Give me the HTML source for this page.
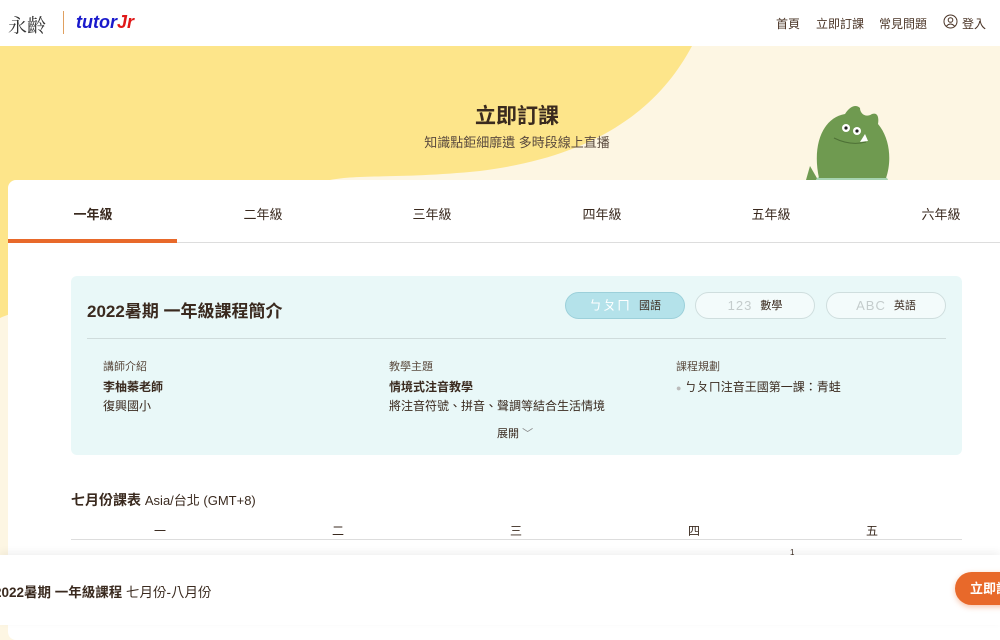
<!DOCTYPE html>
<html><head><meta charset="utf-8"><style>
*{margin:0;padding:0;box-sizing:border-box}
body{width:1000px;height:625px;overflow:hidden;position:relative;background:#fdf6e3;font-family:"Liberation Sans","Noto Sans CJK TC",sans-serif;color:#3a2a1f}
.abs{position:absolute}
header{position:absolute;left:0;top:0;width:1000px;height:46px;background:#fff;z-index:5}
.nav{position:absolute;top:15px;font-size:12px;color:#4a3426}
.card{position:absolute;left:8px;top:180px;width:1000px;height:460px;background:#fff;border-radius:8px}
.tab{position:absolute;top:24px;width:170px;text-align:center;font-size:13px;color:#3a2a1f}
.box{position:absolute;left:63px;top:96px;width:891px;height:179px;background:#e9f8f8;border-radius:6px}
.pill{position:absolute;top:16px;width:120px;height:27px;border:1px solid #cfdede;border-radius:14px;background:#f3fbfb;font-size:11px;line-height:25px;text-align:center}
.pill .g{color:#c4cccc;font-size:13px;letter-spacing:1px;margin-right:8px;vertical-align:-1px}
.lbl{font-size:11px;color:#5a4a3e}
.b{font-size:12px;font-weight:bold}
.t{font-size:12px}
.day{position:absolute;top:342px;font-size:12px;width:40px;text-align:center;margin-left:-20px}
</style></head><body>
<svg class="abs" style="left:0;top:46px" width="1000" height="300">
<path d="M0 0 H692 C660 60 600 110 480 125 C400 133 360 128 330 134 L0 134 Z" fill="#fde58a"/>
<path d="M0 120 H20 V265 C10 268 4 270 0 272 Z" fill="#fde58a"/>
<g>
<path d="M806 134 L810 120 L818 134 Z" fill="#6f9a50"/>
<ellipse cx="852" cy="134" rx="36" ry="8" fill="#a6d4b0"/>
<path d="M819 132 C812 100 822 72 845 68 C850 60 856 58 860 62 C860 68 866 72 872 68 C878 66 879 72 878 78 C890 92 892 115 886 132 Z" fill="#6f9a50"/>
<circle cx="846" cy="82" r="4" fill="#fff"/><circle cx="857" cy="85" r="4" fill="#fff"/>
<circle cx="846" cy="82" r="1.6" fill="#222"/><circle cx="857" cy="85" r="1.6" fill="#222"/>
<path d="M834 92 Q850 100 866 96" stroke="#4d7035" fill="none"/>
<path d="M860 96 L868 95 L865 88 Z" fill="#fff"/>
</g>
</svg>
<header>
<div class="abs" style="left:8px;top:11px;font-size:19px;font-family:'Noto Serif CJK SC',serif;color:#333">永齡</div>
<div class="abs" style="left:63px;top:11px;width:1px;height:23px;background:#e0a060"></div>
<div class="abs" style="left:76px;top:12px;font-size:18px;font-weight:bold;font-style:italic;color:#1a1acc">tutor<span style="color:#e01818">Jr</span></div>
<div class="nav" style="left:776px">首頁</div>
<div class="nav" style="left:816px">立即訂課</div>
<div class="nav" style="left:879px">常見問題</div>
<svg class="abs" style="left:943px;top:14px" width="15" height="15" viewBox="0 0 15 15"><circle cx="7.5" cy="7.5" r="6.5" fill="none" stroke="#4a3426"/><circle cx="7.5" cy="6" r="2.3" fill="none" stroke="#4a3426"/><path d="M3.5 12 Q7.5 8 11.5 12" fill="none" stroke="#4a3426"/></svg>
<div class="nav" style="left:962px">登入</div>
</header>
<div class="abs" style="left:0;width:1000px;text-align:center;top:100px;font-size:21px;font-weight:bold;color:#3a2a1f;padding-left:34px">立即訂課</div>
<div class="abs" style="left:0;width:1000px;text-align:center;top:132px;font-size:13px;color:#5a4a3e;padding-left:34px">知識點鉅細靡遺 多時段線上直播</div>
<div class="card">
<div class="tab" style="left:0;font-weight:bold">一年級</div>
<div class="tab" style="left:170px">二年級</div>
<div class="tab" style="left:339px">三年級</div>
<div class="tab" style="left:509px">四年級</div>
<div class="tab" style="left:678px">五年級</div>
<div class="tab" style="left:848px">六年級</div>
<div class="abs" style="left:0;top:62px;width:1000px;height:1px;background:#ddd"></div>
<div class="abs" style="left:0;top:59px;width:169px;height:4px;background:#e8692a"></div>
<div class="box">
<div class="abs" style="left:16px;top:21px;font-size:17px;font-weight:bold">2022暑期 一年級課程簡介</div>
<div class="pill" style="left:494px;background:#b4e2ea;border-color:#9cd0da"><span class="g" style="color:#fff">ㄅㄆㄇ</span>國語</div>
<div class="pill" style="left:624px"><span class="g">123</span>數學</div>
<div class="pill" style="left:755px"><span class="g">ABC</span>英語</div>
<div class="abs" style="left:16px;top:62px;width:859px;height:1px;background:#cfdcdc"></div>
<div class="abs" style="left:32px;top:82px"><div class="lbl">講師介紹</div><div class="b" style="margin-top:4px">李柚蓁老師</div><div class="t" style="margin-top:2px">復興國小</div></div>
<div class="abs" style="left:318px;top:82px"><div class="lbl">教學主題</div><div class="b" style="margin-top:4px">情境式注音教學</div><div class="t" style="margin-top:2px">將注音符號、拼音、聲調等結合生活情境</div></div>
<div class="abs" style="left:605px;top:82px"><div class="lbl">課程規劃</div><div class="t" style="margin-top:4px"><span style="color:#bbb;font-size:9px">●</span> ㄅㄆㄇ注音王國第一課：青蛙</div></div>
<div class="abs" style="left:426px;top:149px;font-size:11px">展開 <span style="color:#888">﹀</span></div>
</div>
<div class="abs" style="left:63px;top:310px;font-size:14px;font-weight:bold">七月份課表 <span style="font-weight:normal;font-size:13px">Asia/台北 (GMT+8)</span></div>
<div class="day" style="left:152px">一</div><div class="day" style="left:330px">二</div><div class="day" style="left:508px">三</div><div class="day" style="left:686px">四</div><div class="day" style="left:864px">五</div>
<div class="abs" style="left:63px;top:359px;width:891px;height:1px;background:#ddd"></div>
<div class="abs" style="left:782px;top:368px;font-size:8px">1</div>
</div>
<div class="abs" style="left:0;top:555px;width:1000px;height:70px;background:#fff;box-shadow:0 -3px 8px rgba(0,0,0,.06)">
<div class="abs" style="left:-6px;top:26px;font-size:13.5px;font-weight:bold">2022暑期 一年級課程 <span style="font-weight:normal">七月份-八月份</span></div>
<div class="abs" style="left:955px;top:17px;width:80px;height:33px;border-radius:17px;background:#e8692a;color:#fff;font-size:13px;font-weight:bold;line-height:33px;padding-left:15px;box-shadow:0 2px 6px rgba(232,105,42,.4)">立即訂課</div>
</div>
</body></html>
